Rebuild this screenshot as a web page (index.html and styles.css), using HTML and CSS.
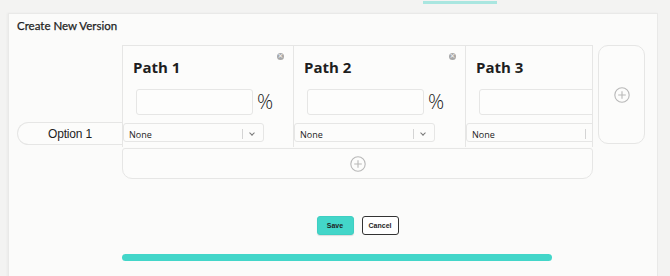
FILE: index.html
```html
<!DOCTYPE html>
<html lang="en">
<head>
  <meta charset="UTF-8" />
  <title>Create New Version</title>
  <link rel="stylesheet" href="styles.css">
</head>
<body>
  <div class="tab-bar">
    <span class="tab-indicator"></span>
  </div>

  <div class="panel">
    <h2 class="panel-title">Create New Version</h2>

    <div class="editor">
      <div class="option-col">
        <div class="option-pill">Option 1</div>
      </div>

      <div class="grid-area">
        <div class="paths">
          <div class="path-col">
            <span class="close-btn">&times;</span>
            <h3 class="path-title">Path 1</h3>
            <div class="share-row">
              <input type="text" class="share-input" />
              <span class="percent">%</span>
            </div>
            <div class="select">
              <span class="select-value">None</span>
              <span class="select-sep"></span>
              <span class="chevron"></span>
            </div>
          </div>

          <div class="path-col">
            <span class="close-btn">&times;</span>
            <h3 class="path-title">Path 2</h3>
            <div class="share-row">
              <input type="text" class="share-input" />
              <span class="percent">%</span>
            </div>
            <div class="select">
              <span class="select-value">None</span>
              <span class="select-sep"></span>
              <span class="chevron"></span>
            </div>
          </div>

          <!-- third path is scrolled partly out of view -->
          <div class="path-col">
            <h3 class="path-title">Path 3</h3>
            <div class="share-row">
              <input type="text" class="share-input" />
            </div>
            <div class="select">
              <span class="select-value">None</span>
              <span class="select-sep"></span>
              <span class="chevron"></span>
            </div>
          </div>
        </div>

        <div class="add-row">
          <svg class="plus-icon" width="16" height="16" viewBox="0 0 16 16">
            <circle cx="8" cy="8" r="7.2" fill="none" stroke="#b8b8b8" stroke-width="1.1"/>
            <path d="M8 4.2v7.6M4.2 8h7.6" stroke="#b8b8b8" stroke-width="1.1"/>
          </svg>
        </div>

        <div class="actions">
          <button type="button" class="btn btn-save">Save</button>
          <button type="button" class="btn btn-cancel">Cancel</button>
        </div>

        <div class="progress"></div>
      </div>

      <div class="add-col">
        <svg class="plus-icon" width="16" height="16" viewBox="0 0 16 16">
          <circle cx="8" cy="8" r="7.2" fill="none" stroke="#b8b8b8" stroke-width="1.1"/>
          <path d="M8 4.2v7.6M4.2 8h7.6" stroke="#b8b8b8" stroke-width="1.1"/>
        </svg>
      </div>
    </div>
  </div>
</body>
</html>
```

FILE: styles.css
```css
/* Reset & Base styles */
* {
  box-sizing: border-box;
  margin: 0;
  padding: 0;
}

body {
  font-family: 'Open Sans', 'Noto Sans', sans-serif;
  background: #f3f3f2;
  color: #222;
  height: 276px;
  overflow: hidden;
}

.tab-bar {
  height: 12px;
  padding-left: 423px;
}

.tab-indicator {
  display: block;
  width: 74px;
  height: 3px;
  margin-top: 1px;
  background: #a9e6e0;
}

.panel {
  margin-left: 8px;
  width: 650px;
  height: 264px;
  background: #fbfbfa;
  border: 1px solid #e9e9e8;
  border-bottom: none;
  box-shadow: -1px 0 2px rgba(0,0,0,0.04);
  padding: 4px 0 0 8px;
}

.panel-title {
  font-family: Lato, 'Open Sans', sans-serif;
  font-size: 11.5px;
  font-weight: 400;
  line-height: 16px;
  color: #1e1e1e;
  margin-bottom: 11px;
  -webkit-text-stroke: 0.25px #1e1e1e;
}

.editor {
  display: flex;
  align-items: flex-start;
}

/* Option label */
.option-col {
  width: 105px;
  padding-top: 77px;
}

.option-pill {
  height: 23px;
  line-height: 22px;
  text-align: center;
  font-family: 'Liberation Sans', Arial, sans-serif;
  font-size: 12px;
  letter-spacing: -0.2px;
  color: #1e1e1e;
  background: #fcfcfb;
  border: 1px solid #e6e6e5;
  border-right: none;
  border-radius: 12px 0 0 12px;
}

/* Paths grid */
.grid-area {
  width: 471px;
}

.paths {
  display: flex;
  height: 102px;
  overflow: hidden;
  border-right: 1px solid #e6e6e5;
}

.path-col {
  position: relative;
  flex: 0 0 171px;
  border-left: 1px solid #e6e6e5;
  border-top: 1px solid #e6e6e5;
  background: #fcfcfb;
}

.path-col + .path-col {
  flex-basis: 172px;
}

.close-btn {
  position: absolute;
  top: 7px;
  right: 9px;
  width: 7px;
  height: 7px;
  border-radius: 50%;
  background: #a8a8a8;
  color: #fff;
  font-size: 7px;
  line-height: 7px;
  text-align: center;
  font-family: 'DejaVu Sans', sans-serif;
}

.path-title {
  font-size: 15px;
  font-weight: 700;
  line-height: 20px;
  color: #1e1e1e;
  padding: 11px 0 0 10px;
}

.share-row {
  display: flex;
  align-items: center;
  margin: 12px 0 0 13px;
}

.share-input {
  flex: 0 0 117px;
  width: 117px;
  height: 26px;
  border: 1px solid #e6e6e5;
  border-radius: 3px;
  background: #fdfdfc;
  outline: none;
}

.percent {
  font-size: 20px;
  font-weight: 300;
  line-height: 26px;
  margin-left: 4px;
  color: #222;
}

.select {
  display: flex;
  align-items: center;
  width: 141px;
  height: 19px;
  margin-top: 8px;
  border: 1px solid #e6e6e5;
  border-radius: 3px;
  background: #fcfcfb;
  padding: 3px 0 0 5px;
}

.select-value {
  flex: 1;
  font-size: 9px;
  color: #222;
}

.select-sep {
  width: 1px;
  height: 10px;
  background: #d4d4d4;
}

.chevron {
  width: 4px;
  height: 4px;
  border-right: 1px solid #777;
  border-bottom: 1px solid #777;
  transform: rotate(45deg);
  margin: 0 9px 3px 7px;
}

.add-row {
  display: flex;
  align-items: center;
  justify-content: center;
  height: 31px;
  margin-top: 1px;
  border: 1px solid #e6e6e5;
  border-radius: 3px 3px 10px 10px;
  background: #fcfcfb;
}

.add-col {
  display: flex;
  align-items: center;
  justify-content: center;
  width: 47px;
  height: 99px;
  margin-left: 5px;
  border: 1px solid #e6e6e5;
  border-radius: 10px;
  background: #fcfcfb;
}

.plus-icon {
  display: block;
}

/* Actions */
.actions {
  display: flex;
  justify-content: center;
  gap: 8px;
  margin-top: 37px;
}

.btn {
  height: 19px;
  width: 37px;
  font-family: 'Liberation Sans', Arial, sans-serif;
  font-size: 7px;
  font-weight: 700;
  color: #1e1e1e;
  border-radius: 3px;
  cursor: pointer;
}

.btn-save {
  background: #43d6c9;
  border: 1px solid #3fcfc2;
  box-shadow: 0 1px 1px rgba(0,0,0,0.12);
}

.btn-cancel {
  background: #fff;
  border: 1.5px solid #333;
}

.progress {
  width: 430px;
  height: 7px;
  margin-top: 19px;
  border-radius: 4px;
  background: #43d6c9;
}
```
